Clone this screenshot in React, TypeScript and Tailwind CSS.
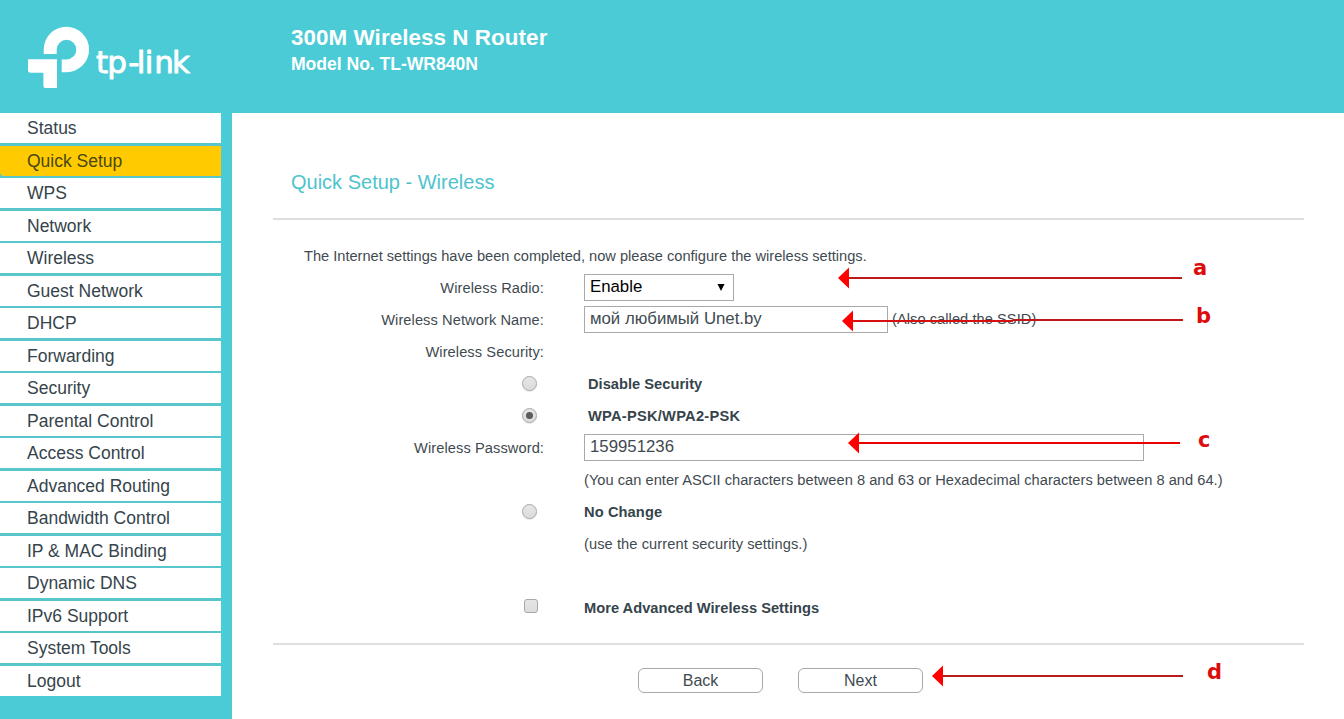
import * as React from "react";

const menuItems = [
  "Status",
  "Quick Setup",
  "WPS",
  "Network",
  "Wireless",
  "Guest Network",
  "DHCP",
  "Forwarding",
  "Security",
  "Parental Control",
  "Access Control",
  "Advanced Routing",
  "Bandwidth Control",
  "IP & MAC Binding",
  "Dynamic DNS",
  "IPv6 Support",
  "System Tools",
  "Logout",
];

const notes = [
  { label: "a", tip: 838, y: 278, end: 1182, endY: 278, color: "#c01818", x: 1193, baseline: 274.5 },
  { label: "b", tip: 842, y: 321, end: 1183, endY: 320, color: "#d80f0f", x: 1196, baseline: 323 },
  { label: "c", tip: 848, y: 443, end: 1180, endY: 443, color: "#e80000", x: 1198, baseline: 447 },
  { label: "d", tip: 932, y: 676, end: 1183, endY: 676, color: "#b81c1c", x: 1207, baseline: 679 },
];

function Logo() {
  return (
    <svg width="240" height="113" viewBox="0 0 240 113" fill="#fff" aria-label="tp-link">
      <path d="M43.7 54V49.6A22.7 22.7 0 1 1 66.4 72.2H61.7V59.4H66.4A9.8 9.8 0 1 0 56.7 49.6V54Z" />
      <path d="M28 59.2H57V88H46Q43.4 88 43.4 85.4V72.7H30.6Q28 72.7 28 70.1Z" />
      <text
        x="96 107.3 128.3 136.8 144.8 154.3 172"
        y="72.6"
        fontFamily="DejaVu Sans, sans-serif"
        fontSize="31"
        stroke="#fff"
        strokeWidth="0.9"
        strokeLinejoin="round"
      >
        tp-link
      </text>
    </svg>
  );
}

function Header() {
  return (
    <header className="flex h-[113px] shrink-0 text-white">
      <div className="w-[291px]">
        <Logo />
      </div>
      <div className="pt-[25px] font-bold">
        <h1 className="text-[22.4px] leading-[26px] tracking-[0.07px]">300M Wireless N Router</h1>
        <p className="text-[17.6px] leading-[26px] tracking-[-0.04px]">Model No. TL-WR840N</p>
      </div>
    </header>
  );
}

function Sidebar() {
  return (
    <nav className="flex w-[221px] shrink-0 flex-col gap-[2.5px] self-start bg-[#59c5cc]">
      {menuItems.map((item) => (
        <a
          key={item}
          className={
            item === "Quick Setup"
              ? "h-[30px] rounded-bl-[4px] bg-[#ffcb00] pl-[27px] text-[17.5px] leading-[30px] text-[#4a4714]"
              : "h-[30px] bg-white pl-[27px] text-[17.5px] leading-[30px] text-[#36444b]"
          }
        >
          {item}
        </a>
      ))}
    </nav>
  );
}

function Row({ label, children }: { label?: React.ReactNode; children?: React.ReactNode }) {
  return (
    <div className="flex h-8 items-center pt-[2px]">
      <div className="flex w-[271px] shrink-0 justify-end tracking-[0.08px]">{label}</div>
      <div className="flex items-center pl-10">{children}</div>
    </div>
  );
}

function Radio({ checked = false }: { checked?: boolean }) {
  return (
    <span className="mr-[7px] mb-1 flex h-[15px] w-[15px] items-center justify-center rounded-full border border-[#a8a8a8] bg-linear-to-b from-[#e6e6e6] to-[#dcdcdc] shadow-[0_1px_1px_#00000018]">
      {checked && <span className="h-[7px] w-[7px] rounded-full bg-[#5c5c5c]" />}
    </span>
  );
}

function Annotations() {
  return (
    <svg className="pointer-events-none absolute inset-0" width="1344" height="719">
      {notes.map((n) => (
        <g key={n.label}>
          {n.endY === n.y ? (
            <path d={`M${n.tip + 8} ${n.y}H${n.end}`} stroke={n.color} strokeWidth="2" />
          ) : (
            <>
              <path d={`M${n.tip + 8} ${n.y}H1013`} stroke={n.color} strokeWidth="2" />
              <path d={`M1013 ${n.endY}H${n.end}`} stroke="#c01818" strokeWidth="2" />
            </>
          )}
          <path d={`M${n.tip} ${n.y}l11 -10.5v21z`} fill="#f00" />
          <text
            x={n.x}
            y={n.baseline}
            fontFamily="DejaVu Sans, sans-serif"
            fontWeight="bold"
            fontSize="21"
            fill="#dc0c0c"
          >
            {n.label}
          </text>
        </g>
      ))}
    </svg>
  );
}

export default function App() {
  return (
    <div className="relative flex h-[719px] w-[1344px] flex-col overflow-hidden bg-[#4acbd6] font-['Liberation_Sans',Arial,sans-serif]">
      <Header />
      <div className="flex min-h-0 flex-1">
        <Sidebar />
        <main className="ml-[11px] flex-1 bg-white pr-10 pl-[41px] text-[14.65px] text-[#3f4a50]">
          <h2 className="pt-[56px] pl-[18px] text-[20px] leading-[26px] text-[#4fc3cd]">
            Quick Setup - Wireless
          </h2>
          <div className="mt-[23px] h-[2px] bg-[#dedede]" />

          <div className="pt-5">
            <p className="pl-[31px] leading-8 tracking-[-0.015px]">
              The Internet settings have been completed, now please configure the wireless settings.
            </p>
            <Row label="Wireless Radio:">
              <div className="mb-1 flex h-[27px] w-[150px] items-center justify-between border border-[#a9a9a9] pr-2 pb-[1px] pl-[5px] text-[16.8px] text-black">
                Enable
                <svg width="8" height="8" viewBox="0 0 8 8">
                  <path d="M0.5 1H7.5L4 8Z" />
                </svg>
              </div>
            </Row>
            <Row label="Wireless Network Name:">
              <div className="mb-1 flex h-[27px] w-[304px] items-center border border-[#a9a9a9] pb-[1px] pl-[5px] text-[16.8px]">
                мой любимый Unet.by
              </div>
              <span className="mb-[2px] pl-1 tracking-[0.05px]">(Also called the SSID)</span>
            </Row>
            <Row label="Wireless Security:" />
            <Row label={<Radio />}>
              <b className="pl-1 tracking-[0.02px] text-[#36444b]">Disable Security</b>
            </Row>
            <Row label={<Radio checked />}>
              <b className="pl-1 tracking-[0.25px] text-[#36444b]">WPA-PSK/WPA2-PSK</b>
            </Row>
            <Row label="Wireless Password:">
              <div className="mb-1 flex h-[27px] w-[560px] items-center border border-[#a9a9a9] pb-[1px] pl-[5px] text-[16.8px]">
                159951236
              </div>
            </Row>
            <Row>
              <span className="tracking-[0.02px]">
                (You can enter ASCII characters between 8 and 63 or Hexadecimal characters between 8 and 64.)
              </span>
            </Row>
            <Row label={<Radio />}>
              <b className="tracking-[0.1px] text-[#36444b]">No Change</b>
            </Row>
            <Row>
              <span className="tracking-[0.08px]">(use the current security settings.)</span>
            </Row>
            <Row />
            <Row
              label={
                <span className="mr-[6px] mb-[6px] h-[14px] w-[14px] rounded-[3px] border border-[#a8a8a8] bg-linear-to-b from-[#e6e6e6] to-[#dcdcdc]" />
              }
            >
              <b className="tracking-[0.02px] text-[#36444b]">More Advanced Wireless Settings</b>
            </Row>
          </div>

          <div className="mt-[19px] h-[2px] bg-[#dedede]" />
          <div className="flex gap-[35px] pt-[23px] pl-[365px]">
            <button className="h-[25px] w-[125px] rounded-[6px] border border-[#a9a9a9] text-base leading-[23px]">
              Back
            </button>
            <button className="h-[25px] w-[125px] rounded-[6px] border border-[#a9a9a9] text-base leading-[23px]">
              Next
            </button>
          </div>
        </main>
      </div>
      <Annotations />
    </div>
  );
}
